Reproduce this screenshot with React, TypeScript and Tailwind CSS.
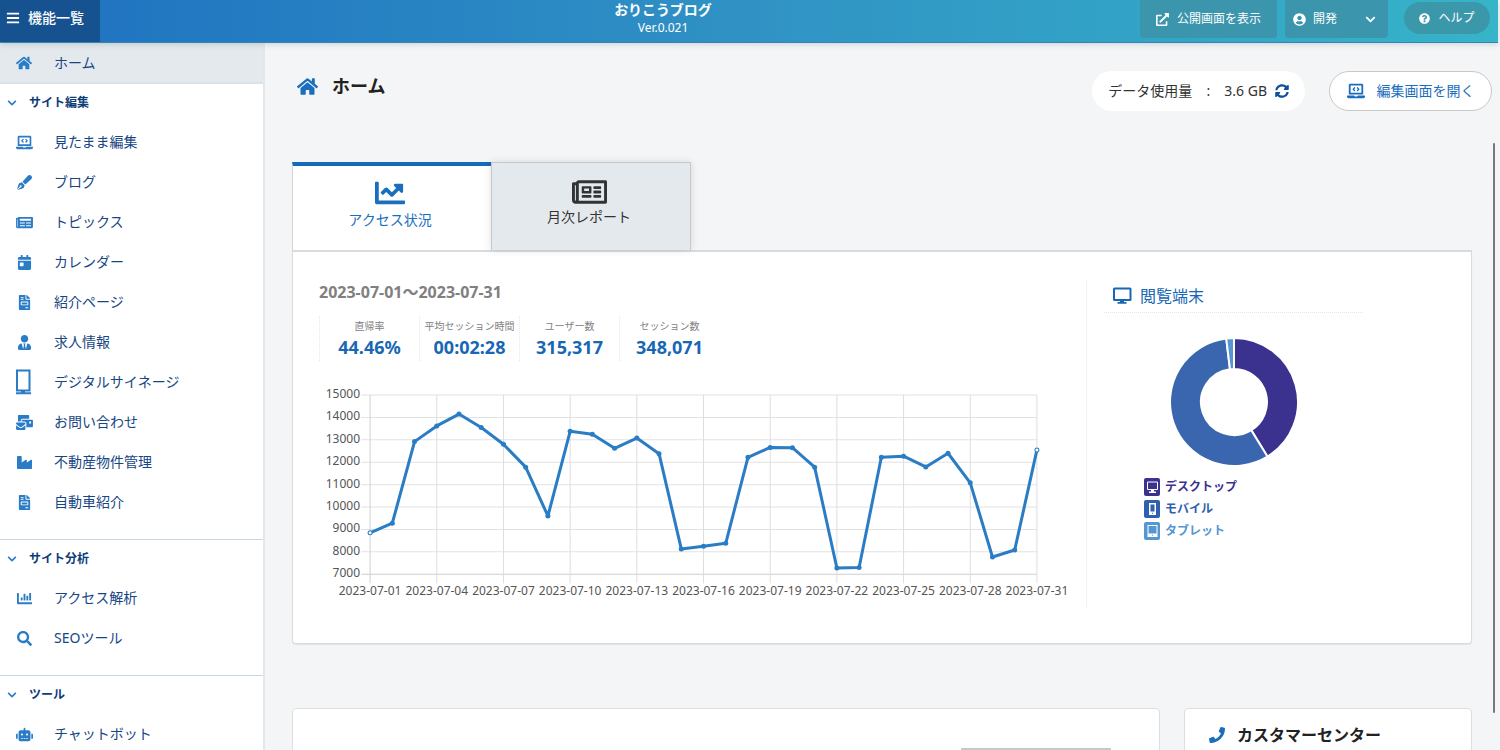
import type { ComponentType, ReactNode } from "react";
import {
  FaBars,
  FaCalendarDay,
  FaChartBar,
  FaChartLine,
  FaChevronDown,
  FaExternalLinkAlt,
  FaFileInvoice,
  FaHome,
  FaIndustry,
  FaLaptopCode,
  FaMailBulk,
  FaNewspaper,
  FaPenFancy,
  FaPhone,
  FaQuestionCircle,
  FaRegNewspaper,
  FaRobot,
  FaSearch,
  FaSyncAlt,
  FaUserCircle,
  FaUserTie,
} from "react-icons/fa";

type IconType = ComponentType<{ className?: string }>;

/* Portrait display on a stand */
function SignageIcon() {
  return (
    <svg viewBox="0 0 16 26" className="-ml-0.5 h-[26px] w-4" aria-hidden="true">
      <rect x="2" y="1.5" width="12.5" height="20" fill="none" stroke="currentColor" strokeWidth="2" />
      <path d="M6 22h4v2H6zM1 23.2h15v2H1z" fill="currentColor" />
    </svg>
  );
}

function MonitorIcon() {
  return (
    <svg viewBox="0 0 20 18" className="h-[18px] w-5" aria-hidden="true">
      <path
        d="M2.500 1.500h15.500a.5.5 0 0 1 .5.5v10.500a.5.5 0 0 1-.5.5H2.500a.5.5 0 0 1-.5-.5V2a.5.5 0 0 1 .5-.5z"
        fill="none"
        stroke="currentColor"
        strokeWidth="2"
      />
      <path d="M8 13h4v2h2.500v1.800h-9V15H8z" fill="currentColor" />
    </svg>
  );
}

type Item = { label: string; icon: IconType };

const sections: { title: string; items: Item[] }[] = [
  {
    title: "サイト編集",
    items: [
      { label: "見たまま編集", icon: FaLaptopCode },
      { label: "ブログ", icon: FaPenFancy },
      { label: "トピックス", icon: FaNewspaper },
      { label: "カレンダー", icon: FaCalendarDay },
      { label: "紹介ページ", icon: FaFileInvoice },
      { label: "求人情報", icon: FaUserTie },
      { label: "デジタルサイネージ", icon: SignageIcon },
      { label: "お問い合わせ", icon: FaMailBulk },
      { label: "不動産物件管理", icon: FaIndustry },
      { label: "自動車紹介", icon: FaFileInvoice },
    ],
  },
  {
    title: "サイト分析",
    items: [
      { label: "アクセス解析", icon: FaChartBar },
      { label: "SEOツール", icon: FaSearch },
    ],
  },
  {
    title: "ツール",
    items: [{ label: "チャットボット", icon: FaRobot }],
  },
];

const stats = [
  { label: "直帰率", value: "44.46%" },
  { label: "平均セッション時間", value: "00:02:28" },
  { label: "ユーザー数", value: "315,317" },
  { label: "セッション数", value: "348,071" },
];

// Daily sessions, 07-01 to 07-31
const sessions = [
  8850, 9280, 12920, 13620, 14150, 13550, 12800, 11780, 9600, 13380, 13250,
  12620, 13080, 12380, 8130, 8250, 8380, 12220, 12660, 12650, 11780, 7280,
  7300, 12220, 12270, 11790, 12400, 11080, 7770, 8080, 12550,
];

const yTicks = [15000, 14000, 13000, 12000, 11000, 10000, 9000, 8000, 7000];
const xTicks = [0, 3, 6, 9, 12, 15, 18, 21, 24, 27, 30];

const px = (day: number) => 51 + (day * 666) / 30;
const py = (value: number) => 12 + ((15000 - value) * 179) / 8000;

function SessionsChart() {
  return (
    <svg viewBox="0 0 752 220" className="w-full" role="img" aria-label="セッション数の推移">
      {yTicks.map((v) => (
        <g key={v}>
          <line x1="42" x2="717" y1={py(v)} y2={py(v)} stroke={v === 7000 ? "#cfcfcf" : "#e2e2e2"} />
          <text x="41" y={py(v) + 3} textAnchor="end" fontSize="12" fill="#555">
            {v}
          </text>
        </g>
      ))}
      {xTicks.map((d) => (
        <g key={d}>
          <line x1={px(d)} x2={px(d)} y1="12" y2="200" stroke={d === 0 ? "#cfcfcf" : "#dedede"} />
          <text x={px(d)} y="212" textAnchor="middle" fontSize="12" fill="#555">
            {`2023-07-${String(d + 1).padStart(2, "0")}`}
          </text>
        </g>
      ))}
      <polyline
        points={sessions.map((v, i) => `${px(i)},${py(v)}`).join(" ")}
        fill="none"
        stroke="#2a7dc4"
        strokeWidth="3"
        strokeLinejoin="round"
      />
      {sessions.map((v, i) => {
        const edge = i === 0 || i === sessions.length - 1;
        return (
          <circle
            key={i}
            cx={px(i)}
            cy={py(v)}
            r={edge ? 2 : 2.5}
            fill={edge ? "#fff" : "#2a7dc4"}
            stroke={edge ? "#2a7dc4" : "none"}
          />
        );
      })}
    </svg>
  );
}

const slices = [
  { from: 0, to: 148.5, color: "#3b318f" },
  { from: 148.5, to: 353, color: "#3a66b0" },
  { from: 353, to: 360, color: "#5696d2" },
];

function arc(from: number, to: number) {
  const at = (deg: number, r: number) => {
    const a = ((deg - 90) * Math.PI) / 180;
    return `${66 + r * Math.cos(a)} ${66 + r * Math.sin(a)}`;
  };
  const large = to - from > 180 ? 1 : 0;
  return `M${at(from, 64)} A64 64 0 ${large} 1 ${at(to, 64)} L${at(to, 33)} A33 33 0 ${large} 0 ${at(from, 33)} Z`;
}

function DeviceDonut() {
  return (
    <svg viewBox="0 0 132 132" className="size-[132px]" role="img" aria-label="閲覧端末の割合">
      {slices.map((s) => (
        <path key={s.color} d={arc(s.from, s.to)} fill={s.color} stroke="#fff" strokeWidth="2" />
      ))}
    </svg>
  );
}

function LegendRow({ color, label, children }: { color: string; label: string; children: ReactNode }) {
  return (
    <li className={`flex h-[22px] items-center gap-1 ${color}`}>
      <svg viewBox="0 0 17 18" className="h-[18px] w-[17px]" aria-hidden="true">
        <rect width="16" height="18" rx="2" fill="currentColor" />
        {children}
      </svg>
      <span className="text-xs font-bold">{label}</span>
    </li>
  );
}

function Header() {
  return (
    <header className="relative z-10 mr-0.5 flex h-[43px] shrink-0 items-start border-b border-[#2f86bd] bg-linear-to-r from-[#1f70c0] via-[#3092c4] to-[#36b4c8] text-white shadow-[0_2px_5px_rgba(0,0,0,0.12)]">
      <button className="flex h-[42px] w-[100px] items-center gap-2 bg-[#16528f] pb-1.5 pl-1.5 text-sm font-medium">
        <FaBars className="size-3.5" />
        機能一覧
      </button>
      <div className="flex-1 pl-[86px] text-center">
        <p className="text-sm leading-5 font-bold">おりこうブログ</p>
        <p className="text-xs leading-4">Ver.0.021</p>
      </div>
      <div className="flex items-start text-xs">
        <a href="#site" className="flex h-[38px] w-[137px] items-center justify-center gap-2 rounded-b-sm bg-[#3b95ac]">
          <FaExternalLinkAlt className="size-[13px]" />
          公開画面を表示
        </a>
        <button className="ml-2 flex h-[38px] w-[103px] items-center rounded-b-sm bg-[#3b95ac] px-2">
          <FaUserCircle className="mr-[7px] size-[13px]" />
          開発
          <FaChevronDown className="mr-1 ml-auto size-[11px]" />
        </button>
        <a href="#help" className="mt-0.5 mr-2 ml-4 flex h-8 w-[86px] items-center justify-center gap-2 rounded-full bg-[#3b98ab]">
          <FaQuestionCircle className="size-[11px]" />
          ヘルプ
        </a>
      </div>
    </header>
  );
}

function Sidebar() {
  return (
    <nav className="w-[265px] shrink-0 overflow-hidden border-r-2 border-[#dfe8ed] bg-white text-sm text-[#174684]">
      <a href="#home" className="flex h-[41px] items-center border-b-2 border-[#d9e1ea] bg-[#e4e9ed]">
        <span className="flex w-12 justify-center text-[#2b7cc6]">
          <FaHome className="size-4" />
        </span>
        <span className="ml-1.5">ホーム</span>
      </a>
      {sections.map((section) => (
        <div key={section.title} className="border-b border-[#c8d6e6] pb-[17px]">
          <button className="flex h-[38px] w-full items-center pl-[7px] text-xs font-bold text-[#0d3c78]">
            <FaChevronDown className="mr-3 size-[10px] text-[#2b7cc6]" />
            {section.title}
          </button>
          <ul>
            {section.items.map(({ label, icon: Icon }) => (
              <li key={label}>
                <a href="#menu" className="flex h-10 items-center">
                  <span className="flex w-12 justify-center text-[#2b7cc6]">
                    <Icon className="h-[15px] w-[17px]" />
                  </span>
                  <span className="ml-1.5">{label}</span>
                </a>
              </li>
            ))}
          </ul>
        </div>
      ))}
    </nav>
  );
}

function AccessPanel() {
  return (
    <section className="flex h-[394px] rounded-b border border-t-2 border-[#d9dcdc] bg-white pt-7 pl-[26px] shadow-[0_1px_1px_rgba(0,0,0,0.08)]">
      <div className="min-w-0 flex-1 pr-3.5">
        <p className="text-base leading-6 font-bold text-[#808080]">2023-07-01～2023-07-31</p>
        <dl className="mt-3 mb-[22px] flex">
          {stats.map((s) => (
            <div key={s.label} className="w-[100px] border-l border-dotted border-gray-200 pt-[3px] text-center">
              <dt className="text-[10px] leading-[14px] whitespace-nowrap text-[#808080]">{s.label}</dt>
              <dd className="text-lg leading-7 font-bold text-[#1767b5]">{s.value}</dd>
            </div>
          ))}
        </dl>
        <SessionsChart />
      </div>
      <div className="mb-9 w-[385px] border-l border-dotted border-gray-200 pl-[17px]">
        <h2 className="flex h-[33px] w-[259px] items-center gap-2 border-b border-dotted border-gray-200 pl-2 text-base text-[#1767b5]">
          <MonitorIcon />
          閲覧端末
        </h2>
        <div className="mt-[23px] flex w-[259px] justify-center">
          <DeviceDonut />
        </div>
        <ul className="mt-2 ml-10">
          <LegendRow color="text-[#3b318f]" label="デスクトップ">
            <path d="M3.500 4h10v7.500h-10z" fill="none" stroke="#fff" />
            <path d="M7 12h3v1.500h2V15H5v-1.500h2z" fill="#fff" />
          </LegendRow>
          <LegendRow color="text-[#2f5fae]" label="モバイル">
            <path d="M5 3h7v12H5z" fill="#fff" />
            <path d="M6.500 4.500h4v7h-4zM8 12.800h1v1H8z" fill="currentColor" />
          </LegendRow>
          <LegendRow color="text-[#5696d2]" label="タブレット">
            <path d="M3.500 3h10v12h-10z" fill="#fff" />
            <path d="M4.500 4h8v7.500h-8zM8 12.800h1v1H8z" fill="currentColor" />
          </LegendRow>
        </ul>
      </div>
    </section>
  );
}

function Main() {
  return (
    <main className="min-w-0 flex-1 overflow-hidden pt-7 pr-7 pl-[27px]">
      {/* Page title and quick actions */}
      <div className="-mr-5 flex h-10 items-center">
        <h1 className="flex items-center gap-3.5 pb-2.5 pl-[5px] text-lg font-bold text-[#222]">
          <FaHome className="size-[21px] text-[#1a6ebd]" />
          ホーム
        </h1>
        <div className="ml-auto flex h-10 items-center rounded-full bg-white px-4 text-sm text-[#333]">
          <span>データ使用量</span>
          <span className="mx-3 w-2 text-center">:</span>
          <span>3.6 GB</span>
          <button aria-label="更新" className="ml-2 text-[#0d4f9a]">
            <FaSyncAlt className="size-[14px]" />
          </button>
        </div>
        <button className="ml-6 flex h-10 w-[163px] items-center justify-center gap-3 rounded-full border border-[#c9c9c9] bg-white text-sm text-[#1a6ebd]">
          <FaLaptopCode className="size-[18px]" />
          編集画面を開く
        </button>
      </div>

      <div role="tablist" className="mt-[51px] flex h-[88px] text-sm">
        <button
          role="tab"
          aria-selected="true"
          className="flex w-[199px] flex-col items-center border-t-4 border-l border-t-[#176ab9] border-l-[#d4d4d4] bg-white pt-3 pr-1 text-[#1a6ebd]"
        >
          <FaChartLine className="size-[30px]" />
          <span className="leading-6">アクセス状況</span>
        </button>
        <button
          role="tab"
          aria-selected="false"
          className="flex w-[200px] flex-col items-center border-x border-t border-[#c8c8c8] bg-[#e4e9ed] pt-3 pr-1 text-[#333] shadow-[0_0_8px_rgba(0,0,0,0.12)]"
        >
          <FaRegNewspaper className="h-[34px] w-[35px]" />
          <span className="leading-4">月次レポート</span>
        </button>
      </div>
      <AccessPanel />

      <div className="mt-16 flex gap-6">
        <section className="flex h-[300px] flex-1 justify-end rounded border border-[#dcdfdf] bg-white pt-[39px] pr-12">
          <div className="h-10 w-[150px] border-2 border-[#c8c8c8]" />
        </section>
        <section className="h-[300px] w-[288px] rounded border border-[#dcdfdf] bg-white pt-3.5 pl-6">
          <h2 className="flex items-center gap-3 text-base font-bold text-[#222]">
            <FaPhone className="size-4 text-[#1a6ebd]" />
            カスタマーセンター
          </h2>
        </section>
      </div>
    </main>
  );
}

export default function App() {
  return (
    <div className="relative flex h-screen flex-col overflow-hidden bg-[#f4f5f7] font-['Noto_Sans','Noto_Sans_CJK_JP',sans-serif]">
      <Header />
      <div className="flex min-h-0 flex-1">
        <Sidebar />
        <Main />
      </div>
      {/* Thin scroll thumb */}
      <div className="absolute top-[19%] right-[5px] h-[76%] w-0.5 rounded-full bg-[#77797d]" />
    </div>
  );
}
